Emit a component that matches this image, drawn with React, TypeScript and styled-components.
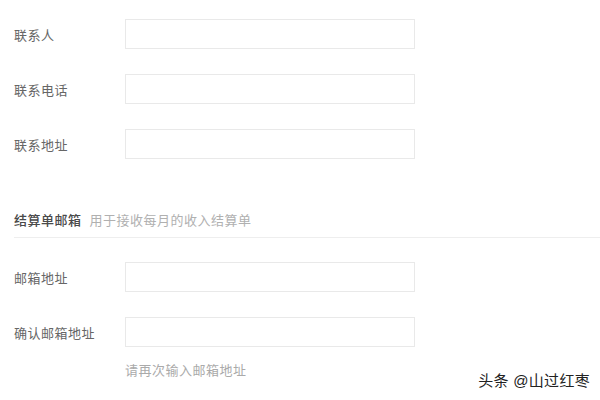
import React from "react";
import styled, { createGlobalStyle } from "styled-components";

const Global = createGlobalStyle`
  html, body { margin: 0; padding: 0; background: #fff; }
  body { font-family: "Liberation Sans", "Noto Sans CJK SC", sans-serif; }
  * { box-sizing: border-box; }
`;

const Page = styled.div`
  position: relative;
  width: 600px;
  height: 400px;
  overflow: hidden;
  padding: 19px 0 0 14px;
  background: #fff;
`;

const Row = styled.div<{ $gap?: number }>`
  display: flex;
  align-items: center;
  margin-bottom: ${(p) => (p.$gap ?? 25)}px;
`;

const Label = styled.div`
  width: 111px;
  font-size: 13px;
  letter-spacing: 0.5px;
  color: #666;
`;

const Input = styled.input`
  width: 290px;
  height: 30px;
  border: 1px solid #e9e9e9;
  background: #fff;
  outline: none;
  padding: 0 8px;
`;

const Section = styled.div`
  display: flex;
  align-items: center;
  gap: 8px;
  height: 30px;
  margin-top: 49px;
  padding-bottom: 6px;
  border-bottom: 1px solid #eeeeee;
  margin-bottom: 24px;
`;

const SectionTitle = styled.span`
  font-size: 13px;
  letter-spacing: 0.5px;
  color: #4a4a4a;
  font-weight: 500;
`;

const SectionHint = styled.span`
  font-size: 13px;
  letter-spacing: 0.5px;
  color: #b0b0b0;
`;

const Help = styled.div`
  margin-left: 111px;
  margin-top: -12px;
  font-size: 13px;
  letter-spacing: 0.5px;
  color: #aaa;
`;

const Watermark = styled.div`
  position: absolute;
  right: 10px;
  bottom: 10px;
  font-size: 15px;
  color: #222;
  text-shadow: 0 0 2px #fff, 0 0 1px #fff;
  letter-spacing: 0.3px;
`;

export default function App() {
  return (
    <>
      <Global />
      <Page>
        <Row>
          <Label>联系人</Label>
          <Input />
        </Row>
        <Row>
          <Label>联系电话</Label>
          <Input />
        </Row>
        <Row $gap={0}>
          <Label>联系地址</Label>
          <Input />
        </Row>
        <Section>
          <SectionTitle>结算单邮箱</SectionTitle>
          <SectionHint>用于接收每月的收入结算单</SectionHint>
        </Section>
        <Row>
          <Label>邮箱地址</Label>
          <Input />
        </Row>
        <Row>
          <Label>确认邮箱地址</Label>
          <Input />
        </Row>
        <Help>请再次输入邮箱地址</Help>
        <Watermark>头条 @山过红枣</Watermark>
      </Page>
    </>
  );
}
